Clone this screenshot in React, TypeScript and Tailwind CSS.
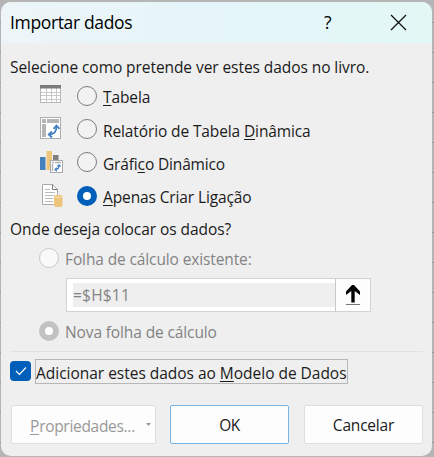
import React from "react";

function Radio({ on = false, disabled = false }: { on?: boolean; disabled?: boolean }) {
  if (on) {
    return (
      <span className={`flex size-5 shrink-0 items-center justify-center rounded-full ${disabled ? "bg-[#c2c2c2]" : "bg-[#005fb8]"}`}>
        <span className="size-2 rounded-full bg-white" />
      </span>
    );
  }
  return (
    <span className={`size-5 shrink-0 rounded-full border ${disabled ? "border-[#c8c8c8] bg-[#f9f9f9]" : "border-[#7c7c7c] bg-[#f2f2f2]"}`} />
  );
}

function Key({ children }: { children: React.ReactNode }) {
  return <span className="underline decoration-1 underline-offset-2">{children}</span>;
}

function TableIcon() {
  return (
    <svg width="24" height="24" viewBox="0 0 24 24">
      <rect x="1.500" y="2.500" width="20" height="17" fill="#fff" stroke="#b8b8b8" />
      <path d="M7.500 5v14M12.500 5v14M17.500 5v14M2 9.500h19M2 12.500h19M2 16.500h19" stroke="#c8c8c8" fill="none" />
      <rect x="1" y="2" width="21" height="3.500" fill="#7b7b7b" />
    </svg>
  );
}

function PivotIcon() {
  return (
    <svg width="24" height="24" viewBox="0 0 24 24">
      <rect x="1.500" y="1.500" width="20" height="21" fill="#fff" stroke="#adadad" />
      <path d="M3 3h4v4H3zM8 3h12v4H8zM3 8h4v13H3z" fill="#b5b5b5" />
      <path d="M10 18.500c5.500 0 7.500-2.500 7.500-8" stroke="#4180c0" strokeWidth="1.8" fill="none" />
      <path d="M14.500 12.800l3-3.300 3 3.300M13 15.500l-3.300 3 3.300 3" stroke="#4180c0" strokeWidth="1.8" fill="none" />
    </svg>
  );
}

function ChartIcon() {
  return (
    <svg width="24" height="24" viewBox="0 0 24 24">
      <rect x="1" y="8" width="5.500" height="13" fill="#4580bd" />
      <rect x="7.500" y="2" width="5.500" height="19" fill="#edc67c" />
      <rect x="14" y="6" width="5.500" height="6" fill="#808080" />
      <rect x="11.500" y="11.500" width="12" height="12" fill="#fff" stroke="#a9a9a9" />
      <path d="M13 13.500h2M16 13.500h6M13.500 15v7" stroke="#b0b0b0" strokeWidth="1.4" fill="none" />
      <path d="M16.500 20.500c2.500 0 3.500-1.500 3.500-4M18.300 17.500l1.700-1.700 1.700 1.700M17.900 18.800L16 20.500l1.900 1.700" stroke="#4180c0" strokeWidth="1.2" fill="none" />
    </svg>
  );
}

function ConnectionIcon() {
  return (
    <svg width="24" height="24" viewBox="0 0 24 24">
      <path d="M3.500 1.500h10l5 5v15h-15z" fill="#fff" stroke="#a9a9a9" />
      <path d="M13.500 1.500v5h5" fill="none" stroke="#777" />
      <path d="M6 6.500h5M6 9.500h10M6 12.500h9M6 15.500h8M6 18.500h8" stroke="#bcbcbc" fill="none" />
      <rect x="15" y="12" width="8.500" height="12" rx="2" fill="#edc67c" />
      <path d="M16 14q3 1 6.500 0" stroke="#fae7bd" fill="none" />
    </svg>
  );
}

function Option({ icon, on, children }: { icon: React.ReactNode; on?: boolean; children: React.ReactNode }) {
  return (
    <div className="flex h-[33.4px] items-center pl-[38px]">
      <span className="mb-0.5 shrink-0">{icon}</span>
      <span className="ml-[14px] flex"><Radio on={on} /></span>
      <span className="ml-1.5 pt-[3px]">{children}</span>
    </div>
  );
}

export default function App() {
  return (
    <div className="h-[457px] w-[434px] overflow-hidden bg-[#b5b5b5] bg-[repeating-linear-gradient(to_bottom,transparent_0,transparent_22px,#999_22px,#999_23px,transparent_23px,transparent_30px)] pl-px pt-0.5 font-['Open_Sans','Noto_Sans',sans-serif] text-[15.5px] leading-5 text-[#1b1b1b]">
      <div className="flex h-[454px] w-[431px] flex-col overflow-hidden rounded-[10px] bg-[#efefef]">
        <header className="flex h-[41px] shrink-0 items-center bg-linear-to-r from-[#edf5f8] via-[#e5f5fa] to-[#e3f8f5] pl-[9px] text-black">
          <h1 className="w-[314px] pb-0.5 text-[17.5px]"><span className="tracking-[-0.35px]">Importar dados</span></h1>
          <span className="w-[8px] pb-0.5 text-[17.5px]">?</span>
          <svg className="mb-px ml-[58px]" width="17" height="17" viewBox="0 0 17 17"><path d="M1 1l15 15M16 1L1 16" stroke="#111" strokeWidth="1.3" /></svg>
        </header>

        <p className="h-[36px] shrink-0 whitespace-nowrap pl-[9px] pt-[14px]"><span className="tracking-[-0.07px]">Selecione como pretende ver estes dados no livro.</span></p>
        <Option icon={<TableIcon />}><span className="tracking-[-0.1px]"><Key>T</Key>abela</span></Option>
        <Option icon={<PivotIcon />}><span className="tracking-[-0.12px]">Relatório de Tabela <Key>D</Key>inâmica</span></Option>
        <Option icon={<ChartIcon />}><span className="tracking-[-0.15px]">Gráfi<Key>c</Key>o Dinâmico</span></Option>
        <Option icon={<ConnectionIcon />} on><span className="tracking-[-0.12px]"><Key>A</Key>penas Criar Ligação</span></Option>

        <p className="h-[29px] shrink-0 pl-[9px] pt-[6px]"><span className="tracking-[-0.05px]">Onde deseja colocar os dados?</span></p>
        <div className="flex h-[32px] shrink-0 items-center gap-1.5 pl-[38px] text-[#838383]">
          <Radio disabled /><span className="pt-[3px] tracking-[-0.12px]">Folha de cálculo existente:</span>
        </div>
        <div className="ml-[65px] mt-1 flex h-[34px] w-[305px] shrink-0 border border-[#d0d2d4] bg-white">
          <div className="my-1 ml-[6px] flex w-[262px] items-center bg-[#efefef] text-[#838383]"><span className="tracking-[0.2px]">=$H$11</span></div>
          <div className="ml-auto flex w-[35px] items-center justify-center border-l border-[#c8c8c8] bg-[#fdfdfd]">
            <svg width="16" height="22" viewBox="0 0 16 22"><path d="M6.300 18.500V7L1 11V7.500L7 1h2l6 6.500V11L9.700 7v11.500z" fill="#000" /><path d="M1 20.500h14" stroke="#777" /></svg>
          </div>
        </div>
        <div className="mt-[2px] flex h-[34px] shrink-0 items-center gap-1.5 pl-[38px] text-[#838383]">
          <Radio on disabled /><span className="pt-0.5 tracking-[-0.12px]">Nova folha de cálculo</span>
        </div>
        <hr className="ml-[9px] mr-[9px] mt-[3px] border-[#e2e2e2]" />
        <div className="mt-[7px] flex h-[25px] shrink-0 items-center pl-[9px]">
          <span className="flex h-5 w-[21px] items-center justify-center rounded-[4px] bg-[#005fb8]">
            <svg width="12" height="10" viewBox="0 0 12 10"><path d="M1 5l3.500 3.500L11 1.500" fill="none" stroke="#fff" strokeWidth="1.2" /></svg>
          </span>
          <span className="ml-1 flex h-[25px] w-[313px] items-center whitespace-nowrap border border-[#b7b7b7] pt-[3px]"><span className="tracking-[-0.02px]">Adicionar estes dados ao <Key>M</Key>odelo de Dados</span></span>
        </div>
        <div className="mt-[21px] flex h-[39px] shrink-0 pl-[10px]">
          <button className="flex w-[145px] items-center justify-center rounded-[2px] border border-[#dedede] bg-[#fdfdfd] pt-[3px] text-[#999]">
            <span className="ml-[14px] tracking-[-0.3px]"><Key>P</Key>ropriedades...</span>
            <svg className="mb-[3px] ml-[11px]" width="5" height="3" viewBox="0 0 5 3"><path d="M0 0h5L2.500 3z" fill="#999" /></svg>
          </button>
          <button className="ml-[14px] w-[119px] rounded-[2px] border border-[#79b5e4] bg-[#fdfdfd] pt-0.5"><span className="tracking-[-0.5px]">OK</span></button>
          <button className="ml-[15px] w-[119px] rounded-[2px] border border-[#dedede] bg-[#fdfdfd] pt-0.5"><span className="tracking-[-0.2px]">Cancelar</span></button>
        </div>
      </div>
    </div>
  );
}
